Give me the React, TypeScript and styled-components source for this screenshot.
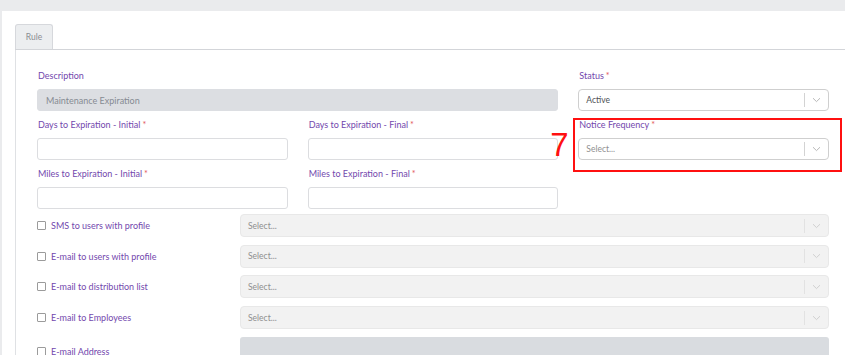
import React from "react";
import styled, { createGlobalStyle } from "styled-components";

const GlobalStyle = createGlobalStyle`
  html, body {
    margin: 0;
    padding: 0;
    background: #ffffff;
  }
  body {
    font-family: Lato, "Open Sans", sans-serif;
  }
`;

const Page = styled.div`
  width: 845px;
  height: 355px;
  overflow: hidden;
  background: #eaebed;
  padding: 11px 0 0 2px;
  box-sizing: border-box;
`;

const Card = styled.div`
  background: #ffffff;
  height: 100%;
  padding: 13px 0 0 13px;
  box-sizing: border-box;
`;

const TabBar = styled.div`
  display: flex;
  border-bottom: 1px solid #d3d5d9;
  height: 25px;
`;

const Tab = styled.div`
  width: 38px;
  height: 25px;
  box-sizing: border-box;
  border: 1px solid #d6d8dc;
  border-bottom: none;
  border-radius: 3px 3px 0 0;
  background: #eceef0;
  color: #8a8d92;
  font-size: 8.5px;
  display: flex;
  align-items: center;
  justify-content: center;
`;

const Panel = styled.div`
  border-left: 1px solid #dfe1e4;
  padding: 19px 15px 0 21px;
  height: 100%;
`;

const Grid = styled.div`
  display: grid;
  grid-template-columns: repeat(3, 1fr);
  column-gap: 20px;
  row-gap: 7px;
  width: 792px;
`;

const Field = styled.div<{ $span?: number }>`
  position: relative;
  grid-column: span ${(p) => p.$span ?? 1};
  display: flex;
  flex-direction: column;
`;

const Label = styled.div`
  color: #7348ad;
  font-size: 9px;
  line-height: 14px;
  margin: 0 0 6px 1px;
  white-space: nowrap;
`;

const Required = styled.span`
  color: #e2575b;
  margin-left: 2px;
`;

const Input = styled.div<{ $disabled?: boolean }>`
  height: 22px;
  box-sizing: border-box;
  border: 1px solid ${(p) => (p.$disabled ? "#dcdee2" : "#dcdde0")};
  border-radius: 3px;
  background: ${(p) => (p.$disabled ? "#dcdee2" : "#ffffff")};
  color: #868b92;
  font-size: 9px;
  padding-left: 8px;
  display: flex;
  align-items: center;
`;

const SelectBox = styled.div<{ $disabled?: boolean }>`
  height: 23px;
  box-sizing: border-box;
  border: 1px solid ${(p) => (p.$disabled ? "#e8e8e8" : "#cfcfcf")};
  border-radius: 4px;
  background: ${(p) => (p.$disabled ? "#f2f2f2" : "#ffffff")};
  display: flex;
  align-items: center;
  flex: 1;
`;

const SelectValue = styled.div<{ $placeholder?: boolean }>`
  flex: 1;
  padding-left: 7px;
  font-size: 8.5px;
  color: ${(p) => (p.$placeholder ? "#8f8f8f" : "#4d4f53")};
`;

const Separator = styled.div<{ $disabled?: boolean }>`
  width: 1px;
  height: 14px;
  background: ${(p) => (p.$disabled ? "#e2e2e2" : "#d3d3d3")};
`;

const Chevron = styled.div`
  width: 23px;
  display: flex;
  align-items: center;
  justify-content: center;
`;

const Annotation = styled.div`
  position: absolute;
  left: -5px;
  top: 0;
  width: 269px;
  height: 54px;
  border: 2px solid #ff1010;
  box-sizing: border-box;
  pointer-events: none;
`;

const AnnotationNumber = styled.div`
  position: absolute;
  left: -28px;
  top: 10px;
  color: #ff1010;
  font-family: "Liberation Sans", Arial, sans-serif;
  font-size: 33px;
  line-height: 33px;
`;

const Channels = styled.div`
  display: flex;
  flex-direction: column;
  gap: 7.7px;
  margin-top: 5px;
  width: 792px;
`;

const ChannelRow = styled.div`
  display: flex;
  align-items: center;
`;

const CheckLabel = styled.label<{ $offset?: number }>`
  width: 203px;
  display: flex;
  align-items: center;
  align-self: ${(p) => (p.$offset ? "flex-start" : "auto")};
  margin-top: ${(p) => p.$offset ?? 0}px;
  gap: 5px;
  color: #7348ad;
  font-size: 9px;
  white-space: nowrap;
`;

const Checkbox = styled.span`
  width: 7px;
  height: 7px;
  border: 1px solid #9b9b9b;
  border-radius: 1px;
  background: #fff;
`;

const GreyBlock = styled.div`
  flex: 1;
  height: 30px;
  background: #d9dce0;
  border-radius: 3px;
`;

const ChevronIcon = ({ color }: { color: string }) => (
  <svg width="9" height="6" viewBox="0 0 9 6">
    <path d="M1 1.2 L4.5 4.6 L8 1.2" fill="none" stroke={color} strokeWidth="1" />
  </svg>
);

const Select = ({
  value,
  disabled,
}: {
  value?: string;
  disabled?: boolean;
}) => (
  <SelectBox $disabled={disabled}>
    <SelectValue $placeholder={!value}>{value ?? "Select..."}</SelectValue>
    <Separator $disabled={disabled} />
    <Chevron>
      <ChevronIcon color={disabled ? "#d0d0d0" : "#b8b8b8"} />
    </Chevron>
  </SelectBox>
);

const channels = [
  "SMS to users with profile",
  "E-mail to users with profile",
  "E-mail to distribution list",
  "E-mail to Employees",
];

export default function App() {
  return (
    <>
      <GlobalStyle />
      <Page>
        <Card>
          <TabBar>
            <Tab>Rule</Tab>
          </TabBar>
          <Panel>
            <Grid>
              <Field $span={2}>
                <Label>Description</Label>
                <Input $disabled>Maintenance Expiration</Input>
              </Field>
              <Field>
                <Label>
                  Status<Required>*</Required>
                </Label>
                <Select value="Active" />
              </Field>

              <Field>
                <Label>
                  Days to Expiration - Initial<Required>*</Required>
                </Label>
                <Input />
              </Field>
              <Field>
                <Label>
                  Days to Expiration - Final<Required>*</Required>
                </Label>
                <Input />
              </Field>
              <Field>
                <Annotation />
                <AnnotationNumber>7</AnnotationNumber>
                <Label>
                  Notice Frequency<Required>*</Required>
                </Label>
                <Select />
              </Field>

              <Field>
                <Label>
                  Miles to Expiration - Initial<Required>*</Required>
                </Label>
                <Input />
              </Field>
              <Field>
                <Label>
                  Miles to Expiration - Final<Required>*</Required>
                </Label>
                <Input />
              </Field>
            </Grid>

            <Channels>
              {channels.map((name) => (
                <ChannelRow key={name}>
                  <CheckLabel>
                    <Checkbox />
                    {name}
                  </CheckLabel>
                  <Select disabled />
                </ChannelRow>
              ))}
              <ChannelRow>
                <CheckLabel $offset={9}>
                  <Checkbox />
                  E-mail Address
                </CheckLabel>
                <GreyBlock />
              </ChannelRow>
            </Channels>
          </Panel>
        </Card>
      </Page>
    </>
  );
}
